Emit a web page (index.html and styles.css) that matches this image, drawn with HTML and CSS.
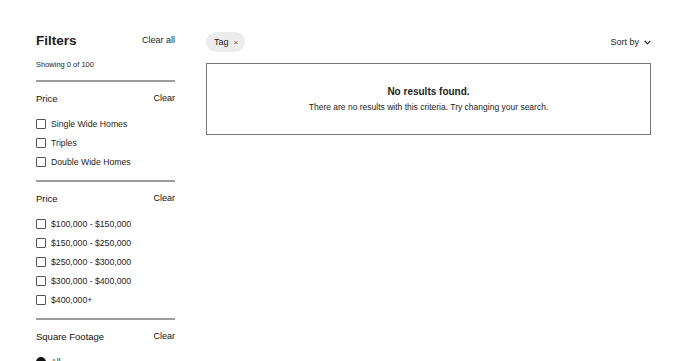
FILE: index.html
```html
<!DOCTYPE html>
<html lang="en">
<head>
  <meta charset="UTF-8">
  <title>Homes</title>
  <link rel="stylesheet" href="styles.css">
</head>
<body>

  <div class="page">
    <aside class="sidebar">
      <div class="sidebar-head">
        <h1>Filters</h1>
        <a href="#" class="link">Clear all</a>
      </div>
      <div class="count">Showing 0 of 100</div>

      <div class="group">
        <div class="group-head">
          <span>Price</span>
          <a href="#" class="link">Clear</a>
        </div>
        <label class="option"><span class="box"></span>Single Wide Homes</label>
        <label class="option"><span class="box"></span>Triples</label>
        <label class="option"><span class="box"></span>Double Wide Homes</label>
      </div>

      <div class="group">
        <div class="group-head">
          <span>Price</span>
          <a href="#" class="link">Clear</a>
        </div>
        <label class="option"><span class="box"></span>$100,000 - $150,000</label>
        <label class="option"><span class="box"></span>$150,000 - $250,000</label>
        <label class="option"><span class="box"></span>$250,000 - $300,000</label>
        <label class="option"><span class="box"></span>$300,000 - $400,000</label>
        <label class="option"><span class="box"></span>$400,000+</label>
      </div>

      <div class="group">
        <div class="group-head">
          <span>Square Footage</span>
          <a href="#" class="link">Clear</a>
        </div>
        <label class="option radio-option"><span class="radio"></span>All</label>
      </div>
    </aside>

    <main class="results">
      <div class="toolbar">
        <span class="tag">Tag <span class="tag-x">×</span></span>
        <button class="sort">Sort by
          <svg width="7" height="5" viewBox="0 0 7 5"><path d="M0.8 1 L3.5 3.8 L6.2 1" fill="none" stroke="#222" stroke-width="1.1"/></svg>
        </button>
      </div>

      <div class="empty">
        <div class="empty-title">No results found.</div>
        <div class="empty-text">There are no results with this criteria. Try changing your search.</div>
      </div>
    </main>
  </div>

</body>
</html>
```

FILE: styles.css
```css
/* — base — */
* { box-sizing: border-box; margin: 0; padding: 0; }
body {
  font-family: 'Liberation Sans', Arial, sans-serif;
  background: #fff;
  color: #1d1d1d;
  overflow: hidden;
}
a { color: inherit; text-decoration: none; }

/* — layout — */
.page {
  display: flex;
  gap: 31px;
  padding: 30px 39px 0 36px;
}

/* — sidebar — */
.sidebar {
  width: 139px;
  flex-shrink: 0;
}
.sidebar-head {
  display: flex;
  justify-content: space-between;
  align-items: center;
  height: 20px;
}
.sidebar-head h1 {
  font-size: 13.5px;
  font-weight: bold;
}
.link {
  font-size: 9px;
}
.count {
  margin-top: 9px;
  font-size: 7.5px;
  line-height: 12px;
}
.count + .group { margin-top: 9px; }

.group {
  border-top: 2px solid #9c9c9c;
  padding: 9px 0 9px;
}
.group-head {
  display: flex;
  justify-content: space-between;
  align-items: center;
  height: 14px;
  margin-bottom: 9px;
  font-size: 9.5px;
  color: #111;
}
.group-head .link { font-size: 9px; }

.option {
  display: flex;
  align-items: center;
  height: 19px;
  font-size: 8.7px;
  color: #1d1d1d;
}
.box {
  width: 10px;
  height: 10px;
  border: 1px solid #555;
  border-radius: 1px;
  margin-right: 5px;
}
.radio {
  width: 10px;
  height: 10px;
  border-radius: 50%;
  background: #111;
  margin-right: 5px;
}
.radio-option { margin-top: 7px; }

/* — results — */
.results {
  flex: 1;
}
.toolbar {
  display: flex;
  justify-content: space-between;
  align-items: center;
  margin-top: 2px;
}
.tag {
  display: inline-flex;
  align-items: center;
  height: 20px;
  padding: 0 7px 0 8px;
  background: #ececec;
  border-radius: 10px;
  font-size: 9px;
}
.tag-x {
  margin-left: 5px;
  font-size: 8px;
  color: #555;
}
.sort {
  display: flex;
  align-items: center;
  gap: 5px;
  border: none;
  background: none;
  font-family: inherit;
  font-size: 9px;
  color: #1d1d1d;
}

.empty {
  margin-top: 11px;
  height: 72px;
  border: 1px solid #777;
  display: flex;
  flex-direction: column;
  align-items: center;
  justify-content: center;
  gap: 5px;
  text-align: center;
}
.empty-title {
  font-size: 10px;
  font-weight: bold;
}
.empty-text {
  font-size: 8.5px;
}
```
